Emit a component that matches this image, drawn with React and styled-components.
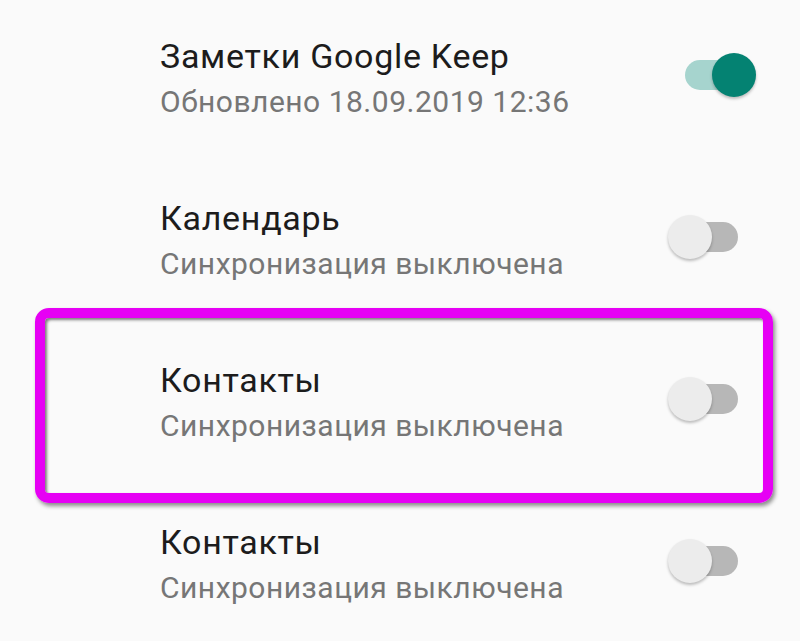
import styled, { createGlobalStyle } from 'styled-components';

const GlobalStyle = createGlobalStyle`
  html, body {
    margin: 0;
    padding: 0;
    background: #fafafa;
  }
  body {
    font-family: Roboto, "Noto Sans", "Liberation Sans", sans-serif;
  }
`;

const Page = styled.div`
  width: 800px;
  height: 641px;
  overflow: hidden;
  background: #fafafa;
  padding-top: 36px;
  box-sizing: border-box;
`;

const Row = styled.div`
  position: relative;
  display: flex;
  align-items: flex-start;
  height: 162px;
  padding-left: 160px;
  padding-right: 42px;
  box-sizing: border-box;
`;

const Highlight = styled.div`
  position: absolute;
  left: 35px;
  top: -52px;
  width: 738px;
  height: 195px;
  box-sizing: border-box;
  border: 10px solid #e600f4;
  border-radius: 14px;
  box-shadow: 2px 3px 4px rgba(0, 0, 0, 0.45),
    inset 2px 2px 3px rgba(0, 0, 0, 0.5);
  pointer-events: none;
`;

const TextCol = styled.div`
  flex: 1;
  display: flex;
  flex-direction: column;
`;

const Title = styled.div`
  font-size: 34px;
  letter-spacing: 0.7px;
  line-height: 40px;
  color: #1c1c1c;
`;

const Subtitle = styled.div`
  margin-top: 6px;
  font-size: 30px;
  letter-spacing: 0.5px;
  line-height: 40px;
  color: #767676;
`;

const Switch = styled.div`
  position: relative;
  width: 90px;
  height: 44px;
  margin-top: 17px;
  flex-shrink: 0;
`;

const Track = styled.div`
  position: absolute;
  left: 17px;
  top: 7px;
  width: 53px;
  height: 30px;
  border-radius: 15px;
  background: ${(p) => (p.$on ? '#a6d4ce' : '#b7b7b7')};
`;

const Thumb = styled.div`
  position: absolute;
  top: 0;
  left: ${(p) => (p.$on ? '44px' : '0')};
  width: 44px;
  height: 44px;
  border-radius: 50%;
  background: ${(p) => (p.$on ? '#048272' : '#ececec')};
  box-shadow: 0 2px 3px rgba(0, 0, 0, 0.25);
`;

const items = [
  { title: 'Заметки Google Keep', sub: 'Обновлено 18.09.2019 12:36', on: true },
  { title: 'Календарь', sub: 'Синхронизация выключена', on: false },
  { title: 'Контакты', sub: 'Синхронизация выключена', on: false, marked: true },
  { title: 'Контакты', sub: 'Синхронизация выключена', on: false },
];

export default function App() {
  return (
    <Page>
      <GlobalStyle />
      {items.map((it, i) => (
        <Row key={i}>
          <TextCol>
            <Title>{it.title}</Title>
            <Subtitle>{it.sub}</Subtitle>
          </TextCol>
          <Switch>
            <Track $on={it.on} />
            <Thumb $on={it.on} />
          </Switch>
          {it.marked && <Highlight />}
        </Row>
      ))}
    </Page>
  );
}
